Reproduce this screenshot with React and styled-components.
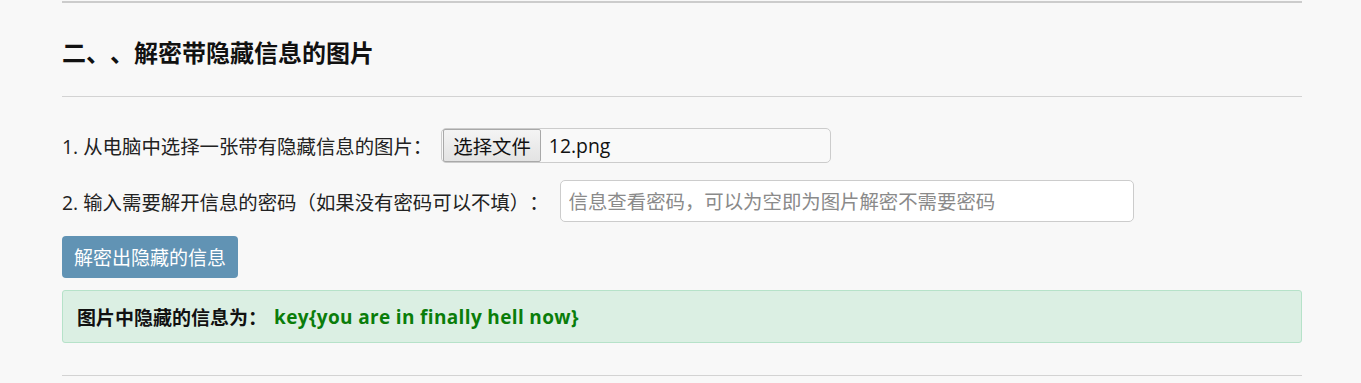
import React from "react";
import styled, { createGlobalStyle } from "styled-components";

const FONT = `"Open Sans", "Noto Sans CJK SC", sans-serif`;

const GlobalStyle = createGlobalStyle`
  html, body {
    margin: 0;
    padding: 0;
    background: #f8f8f8;
  }
  body {
    font-family: ${FONT};
    color: #222;
    text-spacing-trim: space-all;
  }
  input, button {
    text-spacing-trim: space-all;
  }
`;

const Page = styled.div`
  width: 1240px;
  padding-left: 62px;
  padding-top: 1px;
`;

const Rule = styled.div`
  height: ${props => (props.thick ? "2px" : "1px")};
  background: ${props => (props.thick ? "#cccccc" : "#d3d3d3")};
`;

const Title = styled.h2`
  margin: 0;
  padding: 33px 0 26px;
  font-size: 24px;
  line-height: 34px;
  font-weight: bold;
  color: #111;
`;

const Form = styled.div`
  display: flex;
  flex-direction: column;
  align-items: flex-start;
  padding-top: 31px;
`;

const Row = styled.div`
  display: flex;
  align-items: center;
  height: ${props => props.h}px;
  margin-bottom: ${props => props.mb}px;
  font-size: 19.4px;
  color: #222;
`;

const Label = styled.span`
  white-space: nowrap;
  margin-right: ${props => props.gap}px;
`;

const FileBox = styled.div`
  display: flex;
  align-items: center;
  box-sizing: border-box;
  width: 390px;
  height: 35px;
  padding: 1px;
  border: 1px solid #cccccc;
  border-radius: 5px;
  background: #f9f9f9;
`;

const FileButton = styled.span`
  display: flex;
  align-items: center;
  box-sizing: border-box;
  height: 33px;
  padding: 0 9px;
  border: 1px solid #a9a9a9;
  border-radius: 2px;
  background: linear-gradient(#f4f4f4, #e3e3e3);
  font-size: 19.4px;
  color: #111;
`;

const FileName = styled.span`
  margin-left: 8px;
  font-size: 19.4px;
  color: #111;
`;

const TextInput = styled.input`
  box-sizing: border-box;
  width: 574px;
  height: 42px;
  padding: 0 8px;
  border: 1px solid #cccccc;
  border-radius: 5px;
  background: #ffffff;
  font-family: ${FONT};
  font-size: 19.4px;
  outline: none;

  &::placeholder {
    color: #8a8a8a;
  }
`;

const Button = styled.button`
  box-sizing: border-box;
  height: 42px;
  padding: 0 12px;
  margin-bottom: 12px;
  border: none;
  border-radius: 4px;
  background: #6193b4;
  color: #ffffff;
  font-family: ${FONT};
  font-size: 19px;
  cursor: pointer;
`;

const Alert = styled.div`
  box-sizing: border-box;
  display: flex;
  align-items: center;
  width: 1240px;
  height: 53px;
  padding: 0 14px;
  margin-bottom: 32px;
  border: 1px solid #b6e2c9;
  border-radius: 3px;
  background: #dbefe3;
  font-size: 19px;
  font-weight: bold;
  color: #111;
`;

const Secret = styled.span`
  color: #0a7d0a;
  margin-left: 7px;
  letter-spacing: 0.35px;
`;

export default function App() {
  return (
    <>
      <GlobalStyle />
      <Page>
        <Rule thick />
        <Title>二、、解密带隐藏信息的图片</Title>
        <Rule />
        <Form>
          <Row h={35} mb={17}>
            <Label gap={9}>1. 从电脑中选择一张带有隐藏信息的图片：</Label>
            <FileBox>
              <FileButton>选择文件</FileButton>
              <FileName>12.png</FileName>
            </FileBox>
          </Row>
          <Row h={42} mb={14}>
            <Label gap={11}>2. 输入需要解开信息的密码（如果没有密码可以不填）：</Label>
            <TextInput type="password" placeholder="信息查看密码，可以为空即为图片解密不需要密码" />
          </Row>
          <Button>解密出隐藏的信息</Button>
          <Alert>
            图片中隐藏的信息为：<Secret>key{"{"}you are in finally hell now{"}"}</Secret>
          </Alert>
        </Form>
        <Rule />
      </Page>
    </>
  );
}
